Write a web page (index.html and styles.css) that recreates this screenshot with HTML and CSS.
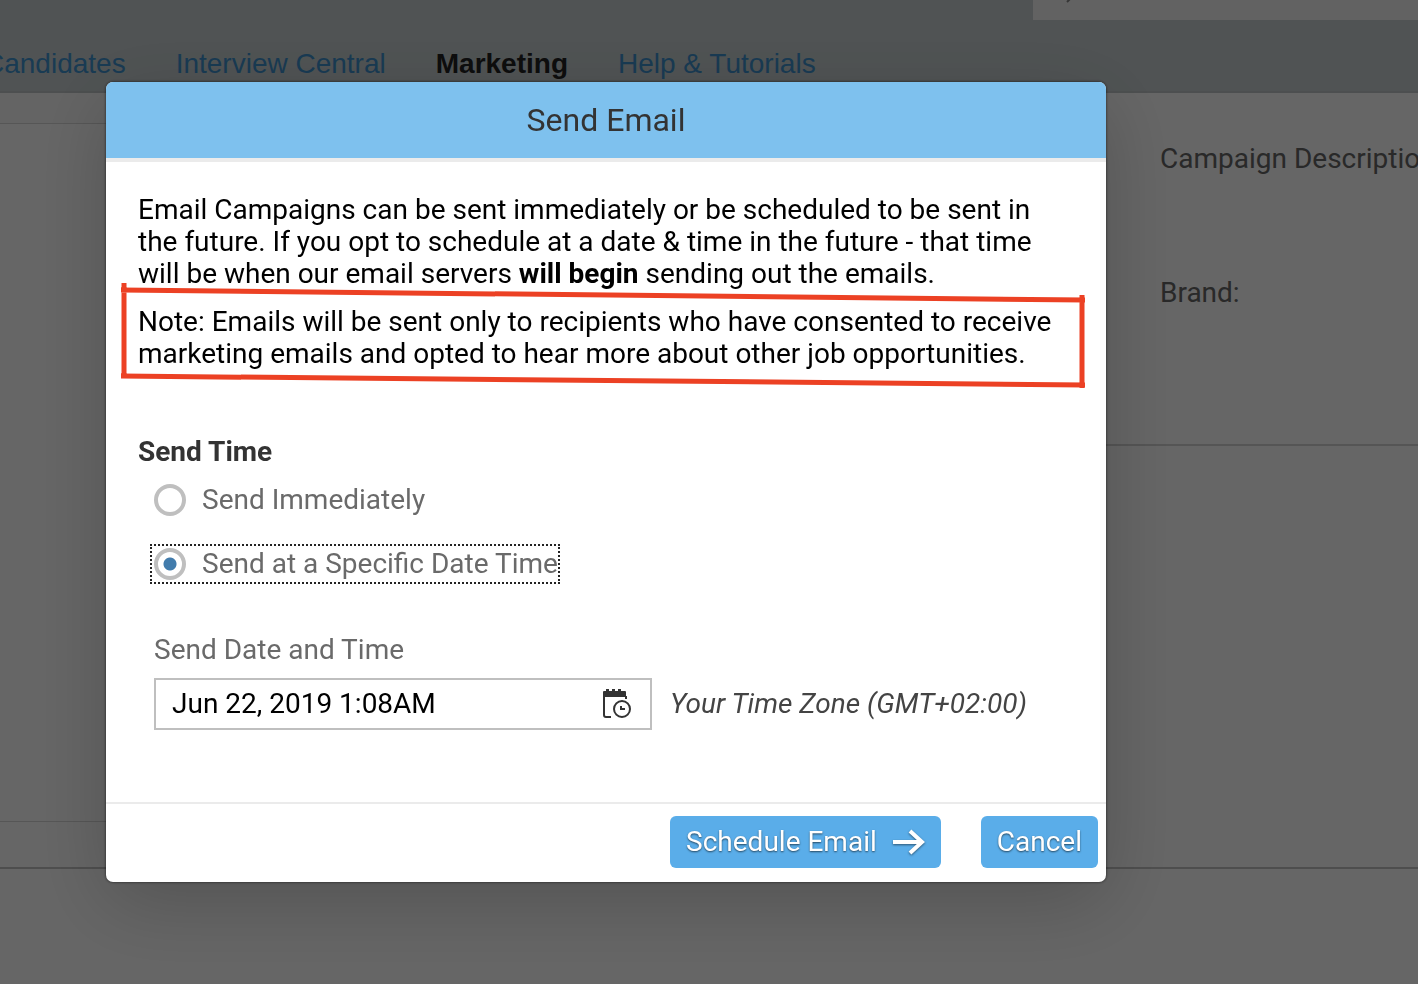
FILE: index.html
```html
<!DOCTYPE html>
<html lang="en">
<head>
<meta charset="utf-8">
<title>Send Email</title>
<link rel="stylesheet" href="styles.css">
</head>
<body>
<div class="page">
  <header class="topbar">
    <div class="search">
      <svg class="search-icon" viewBox="0 0 24 24" aria-hidden="true"><circle cx="14" cy="10" r="8"/><path d="M8 16l-6 6"/></svg>
    </div>
    <nav class="nav">
      <a class="nav-link" href="#candidates">Candidates</a>
      <a class="nav-link" href="#interview">Interview Central</a>
      <a class="nav-link current" href="#marketing">Marketing</a>
      <a class="nav-link" href="#help">Help &amp; Tutorials</a>
    </nav>
  </header>
  <main class="columns">
    <section class="side">
      <div class="side-head"></div>
      <div class="side-body"></div>
      <div class="side-foot"></div>
    </section>
    <section class="details">
      <p class="detail">Campaign Description:</p>
      <p class="detail">Brand:</p>
    </section>
  </main>
</div>

<div class="overlay">
  <form class="dialog" role="dialog" aria-labelledby="dialog-title">
    <header class="dialog-head"><h1 class="dialog-title" id="dialog-title">Send Email</h1></header>
    <div class="dialog-body">
      <p class="text">Email Campaigns can be sent immediately or be scheduled to be sent in the future. If you opt to schedule at a date &amp; time in the future - that time will be when our email servers <b>will begin</b> sending out the emails.</p>
      <p class="text note">Note: Emails will be sent only to recipients who have consented to receive marketing emails and opted to hear more about other job opportunities.
        <svg class="note-frame" viewBox="0 0 964 105" preserveAspectRatio="none" aria-hidden="true"><path d="M3 0V94M0 7L964 17M961 12V105M0 93L964 102"/></svg>
      </p>
      <fieldset class="choices">
        <legend class="legend">Send Time</legend>
        <label class="choice"><input class="radio" type="radio" name="when">Send Immediately</label>
        <label class="choice focused"><input class="radio" type="radio" name="when" checked>Send at a Specific Date Time</label>
      </fieldset>
      <div class="schedule">
        <label class="field-label" for="date">Send Date and Time</label>
        <div class="schedule-row">
          <div class="field">
            <input class="field-input" id="date" type="text" value="Jun 22, 2019 1:08AM">
            <button class="picker" type="button" aria-label="Open date picker">
              <svg class="picker-icon" viewBox="0 0 32 32" aria-hidden="true">
                <path class="solid" d="M2 9V4q0-1 1-1h2V1h3v2h3V1h3v2h3V1h3v2h4q1 0 1 1v5z"/>
                <path class="line" d="M3 8v19q0 2 2 2h5M25 8v3"/>
                <circle class="line" cx="21" cy="21" r="8"/>
                <path class="line" d="M20 18v3h4"/>
              </svg>
            </button>
          </div>
          <span class="zone">Your Time Zone (GMT+02:00)</span>
        </div>
      </div>
    </div>
    <footer class="dialog-foot">
      <button class="button" type="submit">Schedule Email
        <svg class="arrow" viewBox="0 0 34 26" aria-hidden="true"><path d="M2 13H31M19 2L31 13L19 24"/></svg>
      </button>
      <button class="button" type="button">Cancel</button>
    </footer>
  </form>
</div>
</body>
</html>
```
FILE: styles.css
```css
* { box-sizing: border-box; }

body {
  margin: 0;
  overflow: hidden;
  background: #fff;
  color: #333;
  font: 28px/32px Roboto, "Noto Sans", sans-serif;
}

p, h1 { margin: 0; }

button, input { font: inherit; }

/* Page behind the dialog */
.page {
  display: flex;
  flex-direction: column;
  min-height: 100vh;
}

.topbar {
  height: 93px;
  background: #c8d0d2;
  border-bottom: 2px solid #c0c6c8;
}

.search {
  height: 20px;
  margin-left: 1033px;
  padding-left: 32px;
  background: #f4f4f4;
  overflow: hidden;
  display: flex;
  align-items: flex-end;
}

.search-icon {
  width: 24px;
  height: 24px;
  margin-bottom: 16px;
  fill: none;
  stroke: #888;
  stroke-width: 2;
}

.nav {
  display: flex;
  gap: 50px;
  margin: 28px 0 0 -16px;
  font-family: "Liberation Sans", Arial, sans-serif;
}

.nav-link {
  color: #3f93cf;
  text-decoration: none;
  white-space: nowrap;
}

.current {
  color: #222;
  font-weight: bold;
}

.columns {
  flex: 1;
  display: grid;
  grid-template-rows: 776px 1fr;
  grid-template-columns: minmax(0, 1fr) minmax(0, 1fr);
}

.side {
  display: flex;
  flex-direction: column;
  border-bottom: 2px solid #c4c4c4;
}

.side-head {
  height: 31px;
  background: #fafafa;
  border-bottom: 1px solid #d8d8d8;
}

.side-body { flex: 1; }

.side-foot {
  height: 46px;
  border-top: 1px solid #d8d8d8;
}

.details {
  display: flex;
  flex-direction: column;
  gap: 102px;
  padding: 50px 0 0 451px;
  border-bottom: 2px solid #c4c4c4;
  background: linear-gradient(#d4d4d4, #d4d4d4) 0 351px / 100% 2px no-repeat;
}

.detail {
  color: #666;
  white-space: nowrap;
}

/* Dialog */
.overlay {
  position: fixed;
  inset: 0;
  padding: 82px 312px 0 106px;
  background: rgba(0, 0, 0, 0.6);
}

.dialog {
  border-radius: 7px;
  background: #fff;
  box-shadow: 0 0 3px rgba(0, 0, 0, 0.7), 0 20px 80px rgba(0, 0, 0, 0.2);
  overflow: hidden;
}

.dialog-head {
  padding: 18px 0;
  background: #7ec1ee;
  border-bottom: 4px solid #ebebeb;
  text-align: center;
}

.dialog-title {
  color: #333;
  font-size: 32px;
  font-weight: 400;
  line-height: 40px;
}

.dialog-body { padding: 32px 42px 72px 32px; }

.text { color: #000; }

.note {
  position: relative;
  margin-top: 16px;
}

.note-frame {
  position: absolute;
  top: -23px;
  left: -17px;
  width: calc(100% + 38px);
  height: calc(100% + 41px);
  fill: none;
  stroke: #ec4124;
  stroke-width: 5;
}

.choices {
  display: flex;
  flex-direction: column;
  align-items: flex-start;
  gap: 24px;
  margin: 66px 0 0;
  padding: 12px;
  border: 0;
}

.legend {
  margin-left: -12px;
  padding: 0;
  font-weight: bold;
}

.choice {
  display: flex;
  align-items: center;
  gap: 16px;
  height: 40px;
  padding: 0 2px 0 4px;
  color: #6a6a6a;
}

.focused { outline: 2px dotted #222; outline-offset: -2px; }

.radio {
  appearance: none;
  width: 32px;
  height: 32px;
  margin: 0;
  border: 4px solid #bfbfbf;
  border-radius: 50%;
}

.radio:checked { background: radial-gradient(circle, #427cac 6px, transparent 7px); }

.schedule { padding: 38px 0 0 16px; }

.field-label { color: #6a6a6a; }

.schedule-row {
  display: flex;
  align-items: center;
  gap: 18px;
  margin-top: 12px;
}

.field {
  display: flex;
  flex: 0 1 498px;
  align-items: center;
  height: 52px;
  padding: 0 17px 0 16px;
  border: 2px solid #bfbfbf;
}

.field-input {
  flex: 1;
  min-width: 0;
  padding: 0;
  border: 0;
  outline: 0;
  background: none;
  color: #000;
}

.picker {
  display: flex;
  padding: 0;
  border: 0;
  background: none;
}

.picker-icon {
  width: 32px;
  height: 32px;
}

.solid { fill: #333; }

.line {
  fill: none;
  stroke: #333;
  stroke-width: 2;
}

.zone {
  color: #444;
  font-style: italic;
  white-space: nowrap;
}

.dialog-foot {
  display: flex;
  justify-content: flex-end;
  gap: 40px;
  padding: 12px 8px 14px;
  border-top: 2px solid #ebebeb;
}

.button {
  display: flex;
  align-items: center;
  gap: 14px;
  height: 52px;
  padding: 0 16px;
  border: 0;
  border-radius: 6px;
  background: #5aade9;
  color: #fff;
  text-shadow: 0 1px 2px rgba(0, 0, 0, 0.6);
}

.arrow {
  width: 34px;
  height: 26px;
  fill: none;
  stroke: #fff;
  stroke-width: 4;
  filter: drop-shadow(0 1px 1px rgba(0, 0, 0, 0.5));
}
```
